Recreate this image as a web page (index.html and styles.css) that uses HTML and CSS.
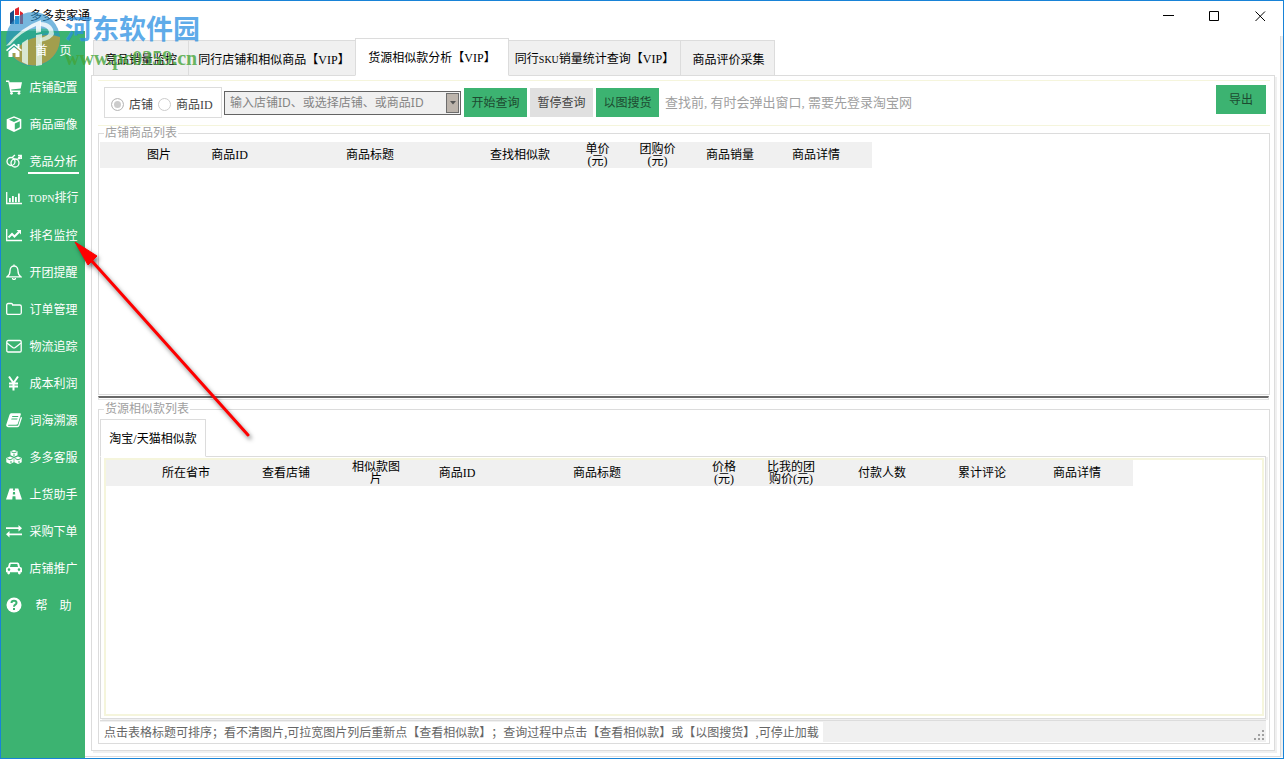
FILE: index.html
```html
<!DOCTYPE html>
<html lang="zh-CN">
<head>
<meta charset="utf-8">
<title>多多卖家通</title>
<link rel="stylesheet" href="styles.css">
</head>
<body>
<div class="window">
  <header class="titlebar">
    <svg class="app-icon" viewBox="0 0 16 18"><path fill="#1b4d86" d="M1 6l4-3v14H1z"/><path fill="#e0242b" d="M6 2l4-2v8H6zM11 4l3 2v11h-3z"/><path fill="#1d8fd6" d="M6 9h4v8H6z"/></svg>
    <h1 class="title">多多卖家通</h1>
    <div class="win-buttons">
      <button class="win-btn" aria-label="最小化"><svg viewBox="0 0 11 11"><path d="M0 4.500h11"/></svg></button>
      <button class="win-btn" aria-label="最大化"><svg viewBox="0 0 11 11"><path d="M.5.5h9v9H.5z"/></svg></button>
      <button class="win-btn" aria-label="关闭"><svg viewBox="0 0 11 11"><path d="M.5.5l9.500 9.500M10 .5L.5 10"/></svg></button>
    </div>
  </header>
  <div class="body">
    <nav class="sidebar">
      <a class="item" href="#"><svg class="ico" viewBox="0 0 16 16"><path class="f" d="M8 1.500L0 8l1 1.300L8 3.600l7 5.700L16 8l-2.500-2V2h-2v2.400zM8 5l-5.500 4.500V15h4v-4h3v4h4V9.500z"/></svg><span class="label">首&emsp;页</span></a>
      <a class="item" href="#"><svg class="ico" viewBox="0 0 16 16"><path class="f" d="M0 1.500h3.200l.4 1.700H16l-1.300 6.300L5.200 10.600l.2 1h9v1.300H4.200L2.300 2.900H0z"/><circle class="f" cx="5.500" cy="14.300" r="1.400"/><circle class="f" cx="13" cy="14.300" r="1.400"/></svg><span class="label">店铺配置</span></a>
      <a class="item" href="#"><svg class="ico" viewBox="0 0 16 16"><path class="f" fill-rule="evenodd" d="M8 .3l7.300 2.900v9.300L8 16 .7 12.500V3.200zM8 1.800L3 3.800l5 2.100 5-2.100zM8.800 7.400v6.300l5-2.500v-6z"/></svg><span class="label">商品画像</span></a>
      <a class="item active" href="#"><svg class="ico" viewBox="0 0 16 16"><circle class="s" cx="5" cy="8.500" r="4"/><circle class="s" cx="9" cy="10" r="4"/><path class="s" d="M11.500 6.500L15 3M12 2.500h3.300V6M6.500 4l2.500-2M12.300 4l2 2"/></svg><span class="label">竞品分析</span></a>
      <a class="item" href="#"><svg class="ico" viewBox="0 0 16 16"><path class="s" d="M.7 2v11.500H16"/><path class="f" d="M3 8h1.800v4.300H3zM6 6h1.800v6.300H6zM9 7h1.800v5.300H9zM12 3.500h1.800v8.800H12z"/></svg><span class="label"><span class="latin">TOPN</span>排行</span></a>
      <a class="item" href="#"><svg class="ico" viewBox="0 0 16 16"><path class="s" d="M.7 2v11.500H16"/><path class="s thick" d="M2.500 10.500L6 7l2.500 2.500L13 5"/><path class="f" d="M10.500 3H15v4.500z"/></svg><span class="label">排名监控</span></a>
      <a class="item" href="#"><svg class="ico" viewBox="0 0 16 16"><path class="s" d="M8 2C5 2 4 4.500 4 7c0 3-1 4.500-2.800 5.800h13.600C13 11.500 12 10 12 7c0-2.500-1-5-4-5zM8 2V.5M6.500 14a1.500 1.500 0 003 0"/></svg><span class="label">开团提醒</span></a>
      <a class="item" href="#"><svg class="ico" viewBox="0 0 16 16"><path class="s" d="M.7 4c0-1 .6-1.500 1.500-1.500h3c1 0 1.500.5 1.500 1.500h7c1 0 1.600.6 1.600 1.500v6.300c0 1-.6 1.500-1.500 1.500H2.200c-1 0-1.500-.5-1.500-1.500z"/></svg><span class="label">订单管理</span></a>
      <a class="item" href="#"><svg class="ico" viewBox="0 0 16 16"><rect class="s" x=".8" y="2.500" width="14.400" height="11.500" rx="1.300"/><path class="s" d="M1 5l5.700 4.500c1 .7 1.600.7 2.600 0L15 5"/></svg><span class="label">物流追踪</span></a>
      <a class="item" href="#"><svg class="ico" viewBox="0 0 16 16"><path class="s bold" d="M3 1.500L7.500 8 12 1.500M7.500 8v7.500M3 8.500h9M3 11.500h9"/></svg><span class="label">成本利润</span></a>
      <a class="item" href="#"><svg class="ico" viewBox="0 0 16 16"><path class="f" fill-rule="evenodd" d="M5.500 1.200h8.300c.9 0 1.300.6 1 1.400l-2.900 9c-.2.800-.8 1.200-1.700 1.200H2.600c-.8 0-.8 1 0 1h8.500c.6 0 1-.3 1.200-.9l2.600-8.200c1 .3 1.200.9.9 1.800l-2.400 7.300c-.3.900-1 1.400-1.900 1.400H2.300C.7 15.200-.2 14 .3 12.600l3.200-9.800c.3-1 1-1.600 2-1.600zM6.400 4L6 5.100h6l.4-1.100zM5.600 6.500l-.4 1.100h6l.4-1.100z"/></svg><span class="label">词海溯源</span></a>
      <a class="item" href="#"><svg class="ico" viewBox="0 0 16 16"><path class="f" d="M8 1l3.500 1.300v3.900L8 7.700 4.500 6.200V2.300zM4 7.500L7.700 9v4.200L4 15 .3 13.200V9zM12 7.500L15.700 9v4.200L12 15l-3.700-1.800V9z"/><path class="edge" d="M5.300 2.800L8 3.900l2.700-1.100M8 5v2M1.200 9.600L4 10.800l2.800-1.200M9.200 9.600l2.800 1.200 2.800-1.200M5 12v2M13 12v2"/></svg><span class="label">多多客服</span></a>
      <a class="item" href="#"><svg class="ico" viewBox="0 0 16 16"><path class="f" fill-rule="evenodd" d="M3.700 2.500h3.500L7 4.500h2l-.2-2h3.500L16 13.500H9.700l-.3-3.200H6.600l-.3 3.200H0zM7 6l-.2 2.500h2.400L9 6z"/></svg><span class="label">上货助手</span></a>
      <a class="item" href="#"><svg class="ico" viewBox="0 0 16 16"><path class="f" d="M0 4.300h12.500V2L16 5.200l-3.500 3.200V6.100H0zM16 10.400H3.500V8.100L0 11.300l3.500 3.200v-2.300H16z"/></svg><span class="label">采购下单</span></a>
      <a class="item" href="#"><svg class="ico" viewBox="0 0 16 16"><path class="f" fill-rule="evenodd" d="M4.800 2.500h6.400c1 0 1.700.5 2 1.500l.8 3c1.300 0 2 .8 2 2v3.200h-1.300v.8c0 1.900-2.700 1.900-2.700 0v-.8H4v.8c0 1.900-2.700 1.900-2.700 0v-.8H0V9c0-1.200.7-2 2-2l.8-3c.3-1 1-1.500 2-1.500zM4.700 4L4 7h8l-.7-3zM3 8.300a1.300 1.300 0 100 2.600 1.300 1.300 0 000-2.600zM13 8.300a1.300 1.300 0 100 2.600 1.300 1.300 0 000-2.600z"/></svg><span class="label">店铺推广</span></a>
      <a class="item" href="#"><svg class="ico" viewBox="0 0 16 16"><circle class="f" cx="8" cy="8" r="7.500"/><path class="mark" d="M5.500 6C5.500 3 10.500 3 10.500 6c0 1.800-2.500 1.600-2.500 3.700M8 11v2"/></svg><span class="label">帮&emsp;助</span></a>
    </nav>

    <main class="main">
      <div class="tabs" role="tablist">
        <button class="tab t1" role="tab">竞品销量监控</button>
        <button class="tab t2" role="tab">同行店铺和相似商品【VIP】</button>
        <button class="tab t3 selected" role="tab" aria-selected="true">货源相似款分析【VIP】</button>
        <button class="tab t4" role="tab">同行<span class="latin">SKU</span>销量统计查询【VIP】</button>
        <button class="tab t5" role="tab">商品评价采集</button>
      </div>
      <div class="panel">
        <form class="toolbar">
          <div class="radios">
            <label class="radio"><input type="radio" name="kind" checked>店铺</label>
            <label class="radio"><input type="radio" name="kind">商品ID</label>
          </div>
          <div class="combo">
            <input class="combo-text" type="text" aria-label="店铺或商品ID" placeholder="输入店铺ID、或选择店铺、或商品ID">
            <button class="combo-btn" type="button" aria-label="选择店铺"><svg viewBox="0 0 6 4"><path d="M0 0h6L3 3.500z"/></svg></button>
          </div>
          <button class="btn" type="button">开始查询</button>
          <button class="btn pause" type="button">暂停查询</button>
          <button class="btn" type="button">以图搜货</button>
          <span class="hint">查找前, 有时会弹出窗口, 需要先登录淘宝网</span>
          <button class="btn export" type="button">导出</button>
        </form>

        <fieldset class="group shop">
          <legend>店铺商品列表</legend>
          <table class="grid">
            <colgroup><col class="w39"><col class="w40"><col class="w101"><col class="w180"><col class="w120"><col class="w35"><col class="w85"><col class="w60"><col class="w112"></colgroup>
            <thead><tr><th></th><th>图片</th><th>商品ID</th><th>商品标题</th><th>查找相似款</th><th>单价<br>(元)</th><th>团购价<br>(元)</th><th>商品销量</th><th>商品详情</th></tr></thead>
          </table>
        </fieldset>

        <div class="splitter"></div>

        <fieldset class="group source">
          <legend>货源相似款列表</legend>
          <div class="subtabs" role="tablist"><button class="subtab" role="tab" aria-selected="true">淘宝/天猫相似款</button></div>
          <div class="subpanel">
            <div class="frame">
              <table class="grid">
                <colgroup><col class="w39"><col class="w82"><col class="w118"><col class="w62"><col class="w100"><col class="w180"><col class="w74"><col class="w60"><col class="w122"><col class="w78"><col class="w112"></colgroup>
                <thead><tr><th></th><th>所在省市</th><th>查看店铺</th><th>相似款图<br>片</th><th>商品ID</th><th>商品标题</th><th>价格<br>(元)</th><th>比我的团<br>购价(元)</th><th>付款人数</th><th>累计评论</th><th>商品详情</th></tr></thead>
              </table>
            </div>
          </div>
          <footer class="status">
            <span class="status-text">点击表格标题可排序；看不清图片,可拉宽图片列后重新点【查看相似款】；查询过程中点击【查看相似款】或【以图搜货】,可停止加载</span>
            <svg class="grip" viewBox="0 0 10 10"><path d="M8 0h2v2H8zM4 4h2v2H4zM8 4h2v2H8zM0 8h2v2H0zM4 8h2v2H4zM8 8h2v2H8z"/></svg>
          </footer>
        </fieldset>
      </div>
    </main>
  </div>

  <div class="watermark">
    <svg class="wm-logo" viewBox="0 0 60 60">
      <circle cx="30" cy="30" r="27" fill="#2a8fcb" opacity=".75"/>
      <path fill="#c39b3b" opacity=".9" d="M8 42Q20 31 34 28Q46 24 57 28A27 27 0 0 1 8 45z"/>
      <path fill="#2aa792" d="M3 37Q12 22 31 20Q46 18 56 24Q38 22 23 32Q13 39 8 47Q4 43 3 37z"/>
      <path fill="#fff" opacity=".85" d="M3 37Q18 18 38 11v12l-5 1V17Q18 23 7 36zM19 34l6-4v26l-6-3zM33 26l6-1v31l-6 1z"/>
      <path fill="#fff" opacity=".8" d="M37 13Q50 13 51 25Q50 30 37 33v-4Q46 27 46 23Q45 18 37 17z"/>
    </svg>
    <div class="wm-name">河东软件园</div>
    <div class="wm-url">www.pc0359.cn</div>
  </div>
  <svg class="arrow" viewBox="0 0 190 210" aria-hidden="true">
    <path d="M182 196L25 21" stroke="#fe0000" stroke-width="3" stroke-linecap="round"/>
    <path d="M9 3l22 14-4 4-5 5z" fill="#fe0000" stroke="#fe0000" stroke-width="1"/>
  </svg>
</div>
</body>
</html>
```
FILE: styles.css
```css
* { box-sizing: border-box; }
body {
  margin: 0;
  font: 12px/14px "Liberation Serif", "Noto Sans CJK SC", sans-serif;
  text-spacing-trim: space-all;
  color: #000;
  background: #fff;
}
button, input {
  font: inherit;
  text-spacing-trim: inherit;
  margin: 0;
  padding: 0;
  border: 0;
  border-radius: 0;
}
.window {
  position: relative;
  display: flex;
  flex-direction: column;
  height: 100vh;
  border: 1px solid #1883d7;
  overflow: hidden;
}
.latin { font-size: 10px; }

/* title bar */
.titlebar {
  display: flex;
  align-items: center;
  flex: none;
  height: 30px;
  padding-left: 8px;
}
.app-icon { width: 16px; height: 18px; }
.title {
  margin: 0 auto 0 5px;
  font-size: 12px;
  font-weight: normal;
}
.win-buttons { display: flex; }
.win-btn {
  display: flex;
  align-items: center;
  justify-content: center;
  width: 46px;
  height: 28px;
  background: none;
}
.win-btn svg {
  width: 11px;
  height: 11px;
  fill: none;
  stroke: #000;
}

/* sidebar */
.body { display: flex; flex: 1; min-height: 0; }
.sidebar {
  flex: none;
  width: 84px;
  background: #3cb371;
}
.item {
  position: relative;
  z-index: 3;
  display: flex;
  align-items: center;
  height: 37px;
  padding: 0 6px 0 5px;
  gap: 6px;
  color: #fff;
  text-decoration: none;
}
.ico { flex: none; width: 16px; height: 16px; }
.label {
  flex: 1;
  padding: 7px 0 3px;
  border-bottom: 2px solid transparent;
  text-align: center;
  white-space: nowrap;
}
.active .label { border-color: #fff; }
.f { fill: #fff; }
.s { fill: none; stroke: #fff; stroke-width: 1.300; }
.thick { stroke-width: 2; }
.bold { stroke-width: 2; }
.edge { fill: none; stroke: #3cb371; }
.mark { fill: none; stroke: #3cb371; stroke-width: 2; }

/* main area */
.main {
  display: flex;
  flex-direction: column;
  flex: 1;
  min-width: 0;
  margin: 5px 2px 1px 0;
  padding: 2px 5px 5px 6px;
  border-right: 1px solid #dcdcdc;
  border-bottom: 1px solid #dcdcdc;
  box-shadow: 2px 0 #f0f0f0;
}
.tabs {
  display: flex;
  align-items: flex-end;
  flex: none;
  height: 38px;
  padding-left: 2px;
  margin-bottom: -1px;
}
.tab {
  height: 36px;
  padding-top: 3px;
  margin-right: -1px;
  border: 1px solid #dcdcdc;
  background: #f0f0f0;
  white-space: nowrap;
}
.t1 { width: 96px; }
.t2 { width: 168px; padding-left: 4px; }
.t3 { width: 154px; }
.t4 { width: 173px; }
.t5 { width: 95px; padding-left: 2px; }
.tab.selected {
  height: 38px;
  padding-top: 1px;
  background: #fff;
  border-bottom-color: #fff;
  z-index: 1;
}
.panel {
  display: flex;
  flex-direction: column;
  flex: 1;
  min-height: 0;
  padding: 4px 4px 6px 6px;
  border: 1px solid #dcdcdc;
  box-shadow: 2px 2px #f0f0f0;
}
.toolbar {
  display: flex;
  align-items: flex-start;
  flex: none;
  height: 46px;
  padding: 6px 4px 0 6px;
  border: solid #f5f5dc;
  border-width: 1px 0;
}
.radios {
  display: flex;
  align-items: center;
  gap: 5px;
  width: 118px;
  height: 31px;
  padding: 4px 6px 0;
  margin-right: 2px;
  border: 1px solid #dcdcdc;
  color: #444;
}
.radio { display: flex; align-items: center; gap: 5px; white-space: nowrap; }
.radio input {
  appearance: none;
  width: 13px;
  height: 13px;
  border: 1px solid #ccc;
  border-radius: 50%;
}
.radio input:checked {
  background: #ccc;
  border-color: #bbb;
  box-shadow: inset 0 0 0 2px #fff;
}
.combo {
  display: flex;
  width: 237px;
  height: 24px;
  margin: 4px 3px 0 0;
  border: 1px solid #646464;
  background: #f0f0f0;
}
.combo-text {
  flex: 1;
  min-width: 0;
  padding: 0 5px;
  background: none;
  font-family: "Noto Sans", "Noto Sans CJK SC", sans-serif;
}
.combo-text::placeholder { color: #848484; opacity: 1; }
.combo-btn {
  display: flex;
  align-items: center;
  justify-content: center;
  width: 13px;
  margin: 1px;
  border: 1px solid #6d6d6d;
  background: #bcb4ac;
}
.combo-btn svg { width: 6px; height: 4px; fill: #555; }
.btn {
  width: 63px;
  height: 29px;
  margin: 1px 3px 0 0;
  background: #3cb371;
  color: #1c4a30;
}
.btn.pause { background: #e0e0e0; color: #444; }
.btn.export { width: 50px; margin: -2px 0 0 auto; }
.hint {
  margin: 8px 0 0 3px;
  font-size: 13px;
  line-height: 16px;
  color: #a0a0a0;
  white-space: nowrap;
}

/* list groups */
.group {
  display: flex;
  flex-direction: column;
  min-width: 0;
  min-height: 0;
  margin: 0;
  padding: 0 1px;
  border: 1px solid #dcdcdc;
}
.group legend {
  margin-left: 4px;
  padding: 0 1px;
  line-height: 15px;
  color: #a0a0a0;
}
.shop { flex: 269 1 0; }
.source { flex: 342 1 0; }
.splitter {
  flex: none;
  height: 4px;
  margin: 1px 1px 2px 0;
  border: 1px solid #e3e3e3;
  border-top: 2px solid #696969;
}
.grid {
  flex: none;
  align-self: flex-start;
  table-layout: fixed;
  width: 1px;
  border-collapse: collapse;
  background: #f0f0f0;
}
.grid th {
  height: 26px;
  padding: 0;
  font-weight: normal;
  line-height: 12px;
  white-space: nowrap;
}
.shop .grid { margin-top: 1px; }
.w35 { width: 35px; }
.w39 { width: 39px; }
.w40 { width: 40px; }
.w60 { width: 60px; }
.w62 { width: 62px; }
.w74 { width: 74px; }
.w78 { width: 78px; }
.w82 { width: 82px; }
.w85 { width: 85px; }
.w100 { width: 100px; }
.w101 { width: 101px; }
.w112 { width: 112px; }
.w118 { width: 118px; }
.w120 { width: 120px; }
.w122 { width: 122px; }
.w180 { width: 180px; }
.subtabs { display: flex; margin: 2px 0 -1px; }
.subtab {
  width: 106px;
  height: 38px;
  padding-top: 1px;
  border: 1px solid #dcdcdc;
  border-bottom-color: #fff;
  background: #fff;
  white-space: nowrap;
  z-index: 1;
}
.subpanel {
  display: flex;
  flex: 1;
  min-height: 0;
  margin-right: 2px;
  padding: 1px 1px 2px 3px;
  border: 1px solid #dcdcdc;
  box-shadow: 2px 1px #f0f0f0;
}
.frame {
  flex: 1;
  min-width: 0;
  border: 2px solid #f5f5dc;
}
.status {
  display: flex;
  align-items: flex-end;
  justify-content: space-between;
  flex: none;
  height: 22px;
  margin: 1px 2px 1px 0;
  border-top: 1px solid #dcdcdc;
  background: #f0f0f0;
}
.status-text {
  height: 20px;
  padding: 0 4px;
  background: #fff;
  color: #666;
  font-family: "Noto Sans CJK SC", sans-serif;
  line-height: 20px;
  white-space: nowrap;
}
.grip { width: 10px; height: 10px; margin: 0 2px 2px 0; fill: #a0a0a0; }

/* overlays */
.watermark, .arrow { position: absolute; pointer-events: none; }
.watermark { left: 2px; top: 8px; z-index: 2; }
.wm-logo {
  position: absolute;
  left: 0;
  top: 0;
  width: 60px;
  height: 60px;
  opacity: .85;
}
.wm-name, .wm-url {
  position: absolute;
  left: 62px;
  white-space: nowrap;
}
.wm-name {
  top: 3px;
  color: rgba(42, 144, 226, .75);
  font: bold 27px/32px "Noto Sans CJK SC", sans-serif;
}
.wm-url {
  top: 37px;
  color: rgba(68, 164, 56, .8);
  font: bold 20px/24px "Liberation Serif", serif;
}
.arrow {
  left: 65px;
  top: 238px;
  width: 190px;
  height: 210px;
  z-index: 4;
  filter: drop-shadow(2px 3px 2px rgba(0, 0, 0, .5));
}
```
